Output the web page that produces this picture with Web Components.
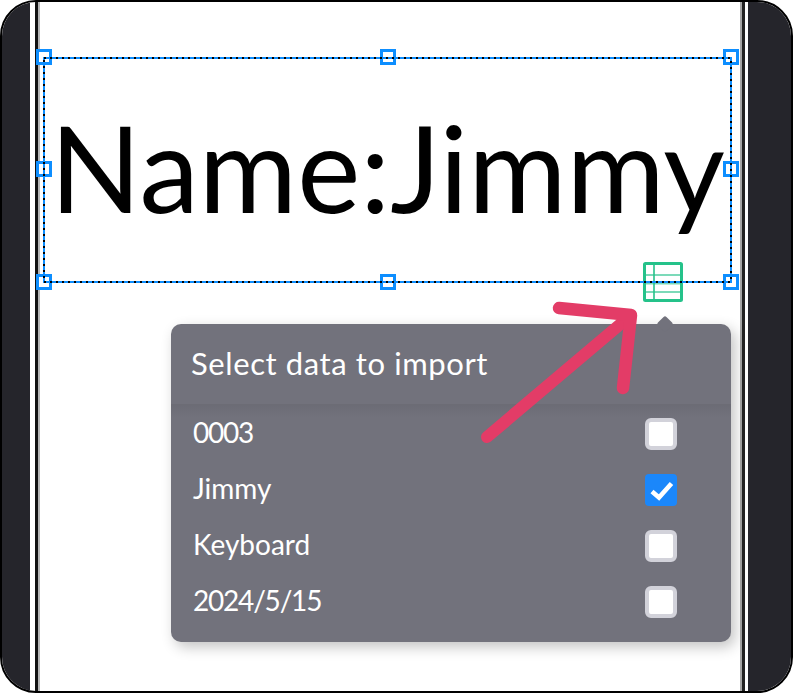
<!DOCTYPE html>
<html>
<head>
<meta charset="utf-8">
<style>
  html, body { margin: 0; padding: 0; background: #fff; }
  body { font-family: Lato, "Open Sans", sans-serif; }
</style>
</head>
<body>
<app-frame>
  <table-icon></table-icon>
  <selection-box>Name:Jimmy</selection-box>
  <import-panel heading="Select data to import">
    <import-row tight>0003</import-row>
    <import-row checked>Jimmy</import-row>
    <import-row>Keyboard</import-row>
    <import-row tight>2024/5/15</import-row>
  </import-panel>
  <arrow-mark></arrow-mark>
</app-frame>

<script>
// Marco exterior con las dos bandas oscuras y el lienzo blanco
class AppFrame extends HTMLElement {
  constructor() {
    super();
    this.attachShadow({mode: 'open'});
    this.shadowRoot.innerHTML = `
      <style>
        :host { display: block; width: 793px; height: 693px; }
        .frame {
          position: relative; display: flex; box-sizing: border-box;
          width: 100%; height: 100%;
          border: 2px solid #000; border-radius: 36px;
          overflow: hidden; background: #fff;
        }
        .band { background: #25252b; }
        .band.left { width: 28px; }
        .band.right { width: 43px; }
        .page { flex: 1; display: flex; justify-content: space-between; }
        .rule { box-sizing: border-box; width: 5px; }
        .rule.left { margin-left: 5px; border-left: 3px solid #111; border-right: 2px solid #b5b5b5; }
        .rule.right { margin-right: 3px; border-left: 2px solid #a5a5a5; border-right: 3px solid #222; }
        .stage { position: absolute; inset: -2px; }
      </style>
      <div class="frame">
        <div class="band left"></div>
        <div class="page"><div class="rule left"></div><div class="rule right"></div></div>
        <div class="band right"></div>
        <div class="stage"><slot></slot></div>
      </div>`;
  }
}

// Caja de texto seleccionada, con sus ocho tiradores
class SelectionBox extends HTMLElement {
  constructor() {
    super();
    this.attachShadow({mode: 'open'});
    let tiradores = [[0,0],[344,0],[687,0],[0,112],[687,112],[0,225],[344,225],[687,225]]
      .map(p => `<i style="left:${p[0] - 8}px;top:${p[1] - 8}px"></i>`).join('');
    this.shadowRoot.innerHTML = `
      <style>
        :host {
          position: absolute; left: 44px; top: 57px;
          display: flex; align-items: center; justify-content: center;
          width: 687px; height: 225px;
          font-family: Lato, "Open Sans", sans-serif;
          font-size: 119.5px; line-height: 225px; color: #000;
          white-space: nowrap;
        }
        svg { position: absolute; left: 0; top: 0; overflow: visible; shape-rendering: crispEdges; }
        i {
          position: absolute; box-sizing: border-box; width: 16px; height: 16px;
          background: #fff; border: 3px solid #0d8eff;
        }
        span { position: relative; top: -3px; }
      </style>
      <span><slot></slot></span>
      ${tiradores}
      <svg width="687" height="225" fill="none">
        <rect x="0" y="1" width="687" height="224" stroke="#0d8eff" stroke-width="2"/>
        <rect x="0" y="1" width="687" height="224" stroke="#000" stroke-width="2" stroke-dasharray="2 4"/>
      </svg>`;
  }
}

// Icono verde de tabla
class TableIcon extends HTMLElement {
  constructor() {
    super();
    this.attachShadow({mode: 'open'});
    this.shadowRoot.innerHTML = `
      <style>
        :host { position: absolute; left: 643px; top: 262px; width: 40px; height: 40px; display: block; }
        svg { display: block; }
      </style>
      <svg width="40" height="40" viewBox="0 0 40 40" fill="none" stroke="#25c28a">
        <path d="M11 1.5V38.5" stroke-width="2" opacity=".8"/>
        <path d="M2 13H38M2 21.5H38M2 30H38" stroke-width="2" opacity=".6"/>
        <rect x="1.5" y="1.5" width="37" height="37" rx="1" stroke-width="3"/>
      </svg>`;
  }
}

// Panel flotante con la lista de datos
class ImportPanel extends HTMLElement {
  constructor() {
    super();
    this.attachShadow({mode: 'open'});
    this.shadowRoot.innerHTML = `
      <style>
        :host {
          position: absolute; left: 171px; top: 324px; width: 560px;
          display: block; box-sizing: border-box;
          background: #72727c; border-radius: 10px; color: #fff;
          box-shadow: 4px 5px 14px rgba(0,0,0,.24);
          font-family: Lato, "Open Sans", sans-serif;
        }
        :host::before {
          content: ""; position: absolute; right: 60px; top: -6px;
          width: 12px; height: 12px; background: #72727c;
          border-radius: 2px; transform: rotate(45deg);
        }
        header {
          position: relative; height: 80px; display: flex; align-items: center;
          padding: 0 20px 3px; box-sizing: border-box; font-size: 31px; letter-spacing: .6px;
        }
        .list {
          position: relative; padding-bottom: 14px; border-radius: 0 0 10px 10px;
          background: linear-gradient(rgba(0,0,0,.06), rgba(0,0,0,0) 14px);
        }
      </style>
      <header></header>
      <div class="list"><slot></slot></div>`;
    this.shadowRoot.querySelector('header').textContent = this.getAttribute('heading');
  }
}

// Fila de la lista: texto y casilla
class ImportRow extends HTMLElement {
  constructor() {
    super();
    this.attachShadow({mode: 'open'});
    let marca = this.hasAttribute('checked');
    this.shadowRoot.innerHTML = `
      <style>
        :host {
          display: flex; align-items: center; justify-content: space-between;
          height: 56px; padding: 0 54px 0 22px; font-size: 28px;
        }
        :host([tight]) span { letter-spacing: -1.2px; }
        .box {
          box-sizing: border-box; width: 32px; height: 32px; margin-top: 4px; border-radius: 6px;
          background: #fff; border: 4px solid #d2d2da;
        }
        .box.on { background: #1b87fa; border: 0; border-radius: 4px; }
        svg { display: block; }
      </style>
      <span><slot></slot></span>
      <div class="box ${marca ? 'on' : ''}">${marca ? `
        <svg width="32" height="32" fill="none" stroke="#fff" stroke-width="4.6">
          <path d="M7 17.5L14 23.5L26.5 9.5"/>
        </svg>` : ''}</div>`;
  }
}

// Flecha roja dibujada encima de todo
class ArrowMark extends HTMLElement {
  constructor() {
    super();
    this.attachShadow({mode: 'open'});
    this.shadowRoot.innerHTML = `
      <style>
        :host { position: absolute; left: 0; top: 0; display: block; pointer-events: none; }
        svg { display: block; }
      </style>
      <svg width="793" height="693" fill="none" stroke="#e33c67" stroke-linecap="round" stroke-linejoin="round">
        <path d="M487 437L630 316" stroke-width="12"/>
        <path d="M559 308L631 315L623 388" stroke-width="12.5"/>
      </svg>`;
  }
}

customElements.define('app-frame', AppFrame);
customElements.define('selection-box', SelectionBox);
customElements.define('table-icon', TableIcon);
customElements.define('import-panel', ImportPanel);
customElements.define('import-row', ImportRow);
customElements.define('arrow-mark', ArrowMark);
</script>
</body>
</html>
